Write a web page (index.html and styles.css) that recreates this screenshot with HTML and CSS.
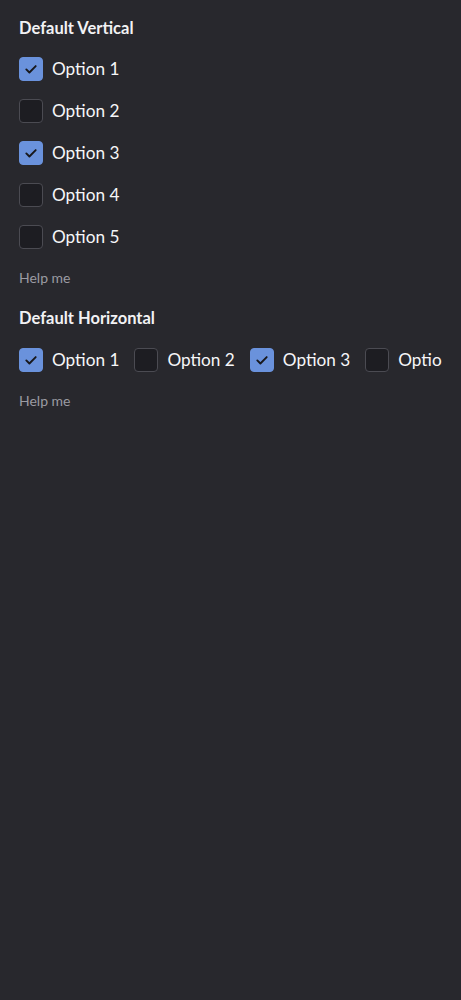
FILE: index.html
```html
<!DOCTYPE html>
<html>
<head>
<meta charset="utf-8">
<link rel="stylesheet" href="styles.css">
</head>
<body>
<div class="page">
  <section class="group">
    <h2 class="title">Default Vertical</h2>
    <div class="list vertical">
      <label class="opt"><span class="box checked"><svg viewBox="0 0 24 24"><path d="M7.3 12.4l3.1 3.1 6.3-6.4"/></svg></span><span class="txt">Option 1</span></label>
      <label class="opt"><span class="box"></span><span class="txt">Option 2</span></label>
      <label class="opt"><span class="box checked"><svg viewBox="0 0 24 24"><path d="M7.3 12.4l3.1 3.1 6.3-6.4"/></svg></span><span class="txt">Option 3</span></label>
      <label class="opt"><span class="box"></span><span class="txt">Option 4</span></label>
      <label class="opt"><span class="box"></span><span class="txt">Option 5</span></label>
    </div>
    <p class="help">Help me</p>
  </section>
  <section class="group">
    <h2 class="title">Default Horizontal</h2>
    <div class="list horizontal">
      <label class="opt"><span class="box checked"><svg viewBox="0 0 24 24"><path d="M7.3 12.4l3.1 3.1 6.3-6.4"/></svg></span><span class="txt">Option 1</span></label>
      <label class="opt"><span class="box"></span><span class="txt">Option 2</span></label>
      <label class="opt"><span class="box checked"><svg viewBox="0 0 24 24"><path d="M7.3 12.4l3.1 3.1 6.3-6.4"/></svg></span><span class="txt">Option 3</span></label>
      <label class="opt"><span class="box"></span><span class="txt">Option 4</span></label>
      <label class="opt"><span class="box"></span><span class="txt">Option 5</span></label>
    </div>
    <p class="help">Help me</p>
  </section>
</div>
</body>
</html>
```
FILE: styles.css
```css
html, body {
  margin: 0;
  padding: 0;
  background: #28282d;
  height: 100%;
}
body {
  font-family: Lato, "Open Sans", sans-serif;
  color: #f2f2f4;
}
.page {
  padding: 18px 19px 0 19px;
}
.group {
  margin: 0 0 21px 0;
}
.title {
  margin: 0;
  font-size: 16.5px;
  font-weight: 700;
  line-height: 20px;
}
.list {
  overflow: hidden;
}
.vertical {
  display: flex;
  flex-direction: column;
  gap: 18px;
  padding-top: 19px;
}
.horizontal {
  display: flex;
  flex-direction: row;
  gap: 15px;
  padding-top: 20px;
  white-space: nowrap;
}
.opt {
  display: flex;
  align-items: center;
  gap: 9px;
  height: 24px;
  flex-shrink: 0;
}
.box {
  box-sizing: border-box;
  width: 24px;
  height: 24px;
  border-radius: 4px;
  border: 1.5px solid #4b4b52;
  background: #1d1d22;
  display: flex;
  align-items: center;
  justify-content: center;
}
.box.checked {
  background: #6a92dc;
  border-color: #6a92dc;
}
.box svg {
  width: 24px;
  height: 24px;
  flex-shrink: 0;
  fill: none;
  stroke: #18181c;
  stroke-width: 1.9;
  stroke-linecap: round;
  stroke-linejoin: round;
}
.txt {
  font-size: 17.2px;
  line-height: 24px;
  color: #f6f6f8;
}
.help {
  margin: 20px 0 0 0;
  font-size: 14px;
  line-height: 18px;
  color: #9b9ba2;
}
```
